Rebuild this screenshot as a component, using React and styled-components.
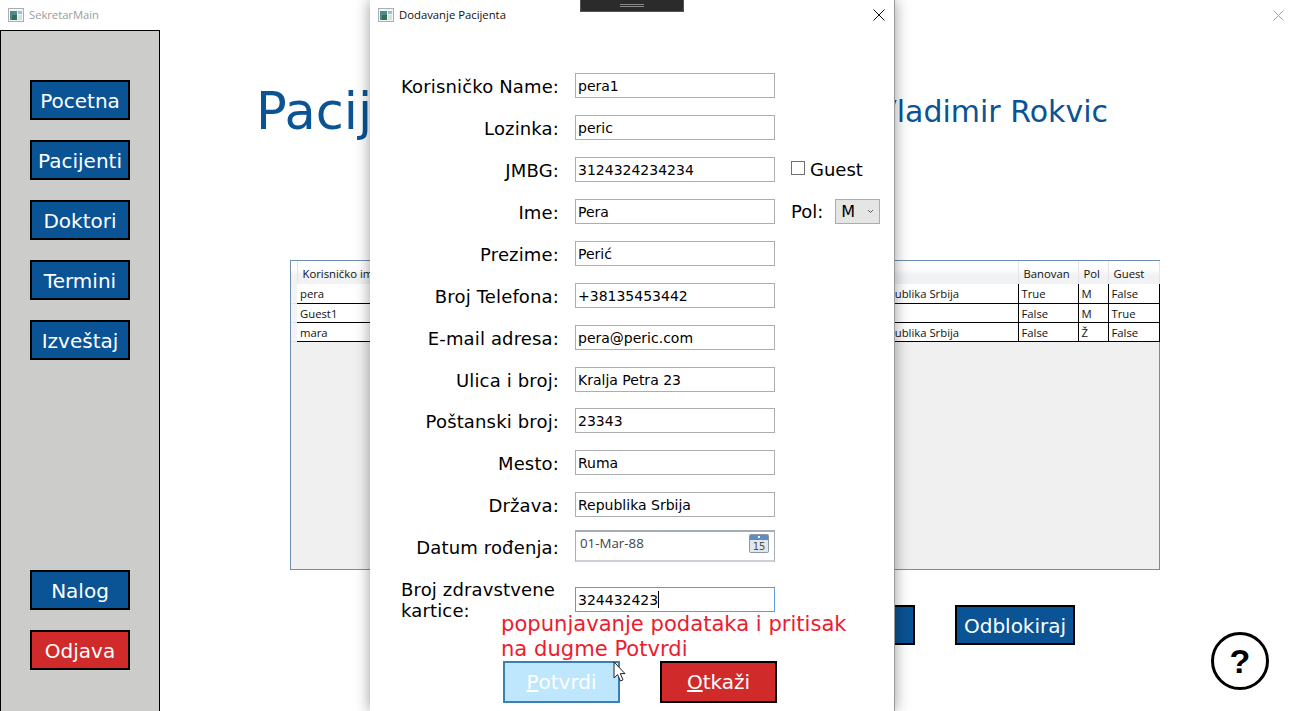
import React from "react";
import styled, {createGlobalStyle} from "styled-components";

const GlobalStyle = createGlobalStyle`
  html, body {
    margin: 0;
    padding: 0;
    background: #fff;
  }
  * {
    box-sizing: border-box;
  }
`

const navItems = ['Pocetna', 'Pacijenti', 'Doktori', 'Termini', 'Izveštaj']

const patients = [
  {name: 'pera', country: 'Republika Srbija', banned: 'True', sex: 'M', guest: 'False'},
  {name: 'Guest1', country: '', banned: 'False', sex: 'M', guest: 'True'},
  {name: 'mara', country: 'Republika Srbija', banned: 'False', sex: 'Ž', guest: 'False'},
]

const WindowIcon = () => (
  <svg width="16" height="14" viewBox="0 0 16 14">
    <rect x="0.5" y="0.5" width="15" height="13" fill="#f4f6f6" stroke="#a9b0b3"/>
    <rect x="2" y="3" width="7" height="9" fill="#4f8a8a"/>
    <rect x="4" y="7" width="5" height="5" fill="#2f6f5c"/>
    <rect x="10" y="3" width="4" height="3" fill="#9fc0c8"/>
    <rect x="10" y="7" width="4" height="5" fill="#d7e0dc"/>
  </svg>
)

const CalendarIcon = () => (
  <svg width="20" height="19" viewBox="0 0 20 19">
    <rect x="0.5" y="0.5" width="19" height="18" rx="1" fill="#e4e7ea" stroke="#8b97a3"/>
    <rect x="1" y="1" width="18" height="5" fill="#5b8fc4"/>
    <rect x="9" y="2" width="2" height="2" fill="#fff"/>
    <text x="10" y="16" textAnchor="middle" fontSize="10" fontFamily="'DejaVu Sans', sans-serif" fill="#47525c">15</text>
  </svg>
)

const App = () => {
  return (
    <Screen>
      <GlobalStyle/>
      <TitleBar>
        <WindowIcon/>
        <TitleText>SekretarMain</TitleText>
        <CloseGlyph $muted>
          <svg width="11" height="11" viewBox="0 0 11 11"><path d="M0.5 0.5 10.5 10.5M10.5 0.5 0.5 10.5" stroke="currentColor" fill="none"/></svg>
        </CloseGlyph>
      </TitleBar>
      <Body>
        <Sidebar>
          <NavGroup>
            {navItems.map(item => <MenuButton key={item}>{item}</MenuButton>)}
          </NavGroup>
          <NavGroup>
            <MenuButton>Nalog</MenuButton>
            <MenuButton $danger>Odjava</MenuButton>
          </NavGroup>
        </Sidebar>
        <Main>
          <Heading>
            <PageTitle>Pacijenti</PageTitle>
            <UserName>Vladimir Rokvic</UserName>
          </Heading>
          <GridPanel>
            <Table>
              <colgroup>
                <col width="6"/>
                <col width="574"/>
                <col width="147"/>
                <col width="60"/>
                <col width="30"/>
                <col width="51"/>
              </colgroup>
              <thead>
                <tr>
                  <HeadCell/>
                  <HeadCell>Korisničko ime</HeadCell>
                  <HeadCell/>
                  <HeadCell>Banovan</HeadCell>
                  <HeadCell>Pol</HeadCell>
                  <HeadCell>Guest</HeadCell>
                </tr>
              </thead>
              <tbody>
                {patients.map(p => (
                  <tr key={p.name}>
                    <RowHeader/>
                    <Cell>{p.name}</Cell>
                    <Cell>{p.country}</Cell>
                    <Cell>{p.banned}</Cell>
                    <Cell>{p.sex}</Cell>
                    <Cell>{p.guest}</Cell>
                  </tr>
                ))}
              </tbody>
            </Table>
          </GridPanel>
          <Actions>
            <MenuButton $wide>Blokiraj</MenuButton>
            <MenuButton $wide>Odblokiraj</MenuButton>
            <HelpButton>?</HelpButton>
          </Actions>
        </Main>
      </Body>

      <Dialog>
        <DialogBar>
          <WindowIcon/>
          <DialogTitle>Dodavanje Pacijenta</DialogTitle>
          <CloseGlyph>
            <svg width="12" height="12" viewBox="0 0 12 12"><path d="M0.5 0.5 11.5 11.5M11.5 0.5 0.5 11.5" stroke="currentColor" fill="none"/></svg>
          </CloseGlyph>
        </DialogBar>
        <Form>
          <FormRow>
            <Label>Korisničko Name:</Label>
            <Field>pera1</Field>
          </FormRow>
          <FormRow>
            <Label>Lozinka:</Label>
            <Field>peric</Field>
          </FormRow>
          <FormRow>
            <Label>JMBG:</Label>
            <Field>3124324234234</Field>
            <Extra>
              <CheckBox/>
              <ExtraLabel>Guest</ExtraLabel>
            </Extra>
          </FormRow>
          <FormRow>
            <Label>Ime:</Label>
            <Field>Pera</Field>
            <Extra>
              <ExtraLabel>Pol:</ExtraLabel>
              <SelectBox>
                M
                <svg width="7" height="5" viewBox="0 0 7 5"><path d="M1 1 3.5 3.5 6 1" stroke="#555" fill="none"/></svg>
              </SelectBox>
            </Extra>
          </FormRow>
          <FormRow>
            <Label>Prezime:</Label>
            <Field>Perić</Field>
          </FormRow>
          <FormRow>
            <Label>Broj Telefona:</Label>
            <Field>+38135453442</Field>
          </FormRow>
          <FormRow>
            <Label>E-mail adresa:</Label>
            <Field>pera@peric.com</Field>
          </FormRow>
          <FormRow>
            <Label>Ulica i broj:</Label>
            <Field>Kralja Petra 23</Field>
          </FormRow>
          <FormRow $space={16}>
            <Label>Poštanski broj:</Label>
            <Field>23343</Field>
          </FormRow>
          <FormRow>
            <Label>Mesto:</Label>
            <Field>Ruma</Field>
          </FormRow>
          <FormRow>
            <Label>Država:</Label>
            <Field>Republika Srbija</Field>
          </FormRow>
          <FormRow $space={13}>
            <Label>Datum rođenja:</Label>
            <DateField>
              <span>01-Mar-88</span>
              <CalendarIcon/>
            </DateField>
          </FormRow>
          <FormRow $space={16}>
            <Label $wrap>Broj zdravstvene kartice:</Label>
            <Field $focused>324432423<Caret/></Field>
          </FormRow>
        </Form>
        <Buttons>
          <DialogButton $primary><u>P</u>otvrdi</DialogButton>
          <DialogButton><u>O</u>tkaži</DialogButton>
        </Buttons>
        <Hint>popunjavanje podataka i pritisak<br/>na dugme Potvrdi</Hint>
        <Pointer width="14" height="22" viewBox="0 0 14 22">
          <path d="M1 1V17L4.6 13.6 7.4 20 10 18.8 7.3 12.6H12Z" fill="#fff" stroke="#222"/>
        </Pointer>
      </Dialog>

      <RemoteTab>
        <TabGrip/>
      </RemoteTab>
    </Screen>
  )
}

export default App;

const Screen = styled.div`
  position: relative;
  width: 1294px;
  height: 711px;
  overflow: hidden;
  display: flex;
  flex-direction: column;
  background: #fff;
  font-family: "DejaVu Sans", Verdana, sans-serif;
`

const TitleBar = styled.div`
  height: 30px;
  flex: none;
  display: flex;
  align-items: center;
  padding: 0 10px 0 8px;
  gap: 5px;
`
const TitleText = styled.span`
  padding-bottom: 2px;
  font: 11.2px "Open Sans", "Noto Sans", sans-serif;
  color: #9b9b9b;
`
const CloseGlyph = styled.span`
  margin-left: auto;
  display: flex;
  color: ${p => p.$muted ? '#a3a3a3' : '#111'};
`

const Body = styled.div`
  flex: 1;
  display: flex;
  min-height: 0;
`
const Sidebar = styled.div`
  width: 160px;
  flex: none;
  display: flex;
  flex-direction: column;
  justify-content: space-between;
  padding: 49px 0 41px 29px;
  background: #cccccb;
  border: 1px solid #000;
  border-bottom: 0;
`
const NavGroup = styled.div`
  display: flex;
  flex-direction: column;
  gap: 20px;
`
const MenuButton = styled.div`
  width: ${p => p.$wide ? '120px' : '100px'};
  height: 40px;
  display: flex;
  align-items: center;
  justify-content: center;
  padding-top: 2px;
  background: ${p => p.$danger ? '#d12a2a' : '#0a5394'};
  border: 2px solid #000;
  color: #fff;
  font-size: 20px;
`

const Main = styled.div`
  flex: 1;
  min-width: 0;
  display: flex;
  flex-direction: column;
`
const Heading = styled.div`
  height: 230px;
  flex: none;
  display: flex;
  align-items: flex-start;
  padding: 49px 0 0 96px;
  color: #0a5394;
  width: 948px;
  justify-content: space-between;
`
const PageTitle = styled.div`
  font-size: 51px;
  line-height: 66px;
`
const UserName = styled.div`
  font-size: 30px;
  line-height: 40px;
  margin-top: 13px;
`

const GridPanel = styled.div`
  margin-left: 130px;
  width: 870px;
  height: 310px;
  flex: none;
  background: #f0f0f0;
  border: 1px solid #6d8fb5;
`
const Table = styled.table`
  width: 868px;
  table-layout: fixed;
  border-collapse: collapse;
  font: 11.3px "Open Sans", "Noto Sans", sans-serif;
  color: #111;
`
const HeadCell = styled.th`
  height: 23px;
  padding: 1px 0 0 5px;
  font-weight: 400;
  text-align: left;
  background: linear-gradient(180deg, #ffffff 0%, #ffffff 35%, #f1f2f3 60%, #f1f2f3 100%);
  border-right: 1px solid #e3e5e8;
`
const RowHeader = styled.td`
  padding: 0;
  background: #f3f3f3;
  border-bottom: 1px solid #e4e4e4;
`
const Cell = styled.td`
  height: 19px;
  padding: 1px 0 0 3px;
  background: #fff;
  border-bottom: 1px solid #000;
  border-right: 1px solid #000;
`

const Actions = styled.div`
  display: flex;
  align-items: flex-start;
  gap: 40px;
  margin: 35px 0 0 635px;
`
const HelpButton = styled.div`
  width: 58px;
  height: 58px;
  margin: 27px 0 0 96px;
  display: flex;
  align-items: center;
  justify-content: center;
  border: 3px solid #000;
  border-radius: 50%;
  font: 700 34px "Liberation Sans", Arial, sans-serif;
  color: #000;
`

const Dialog = styled.div`
  position: absolute;
  left: 370px;
  top: 0;
  width: 525px;
  height: 711px;
  display: flex;
  flex-direction: column;
  background: #fff;
  border-right: 1px solid #9a9a9a;
  box-shadow: 0 0 14px rgba(0, 0, 0, .4);
`
const DialogBar = styled.div`
  height: 30px;
  flex: none;
  display: flex;
  align-items: center;
  gap: 5px;
  padding: 0 9px 0 8px;
`
const DialogTitle = styled.span`
  padding-bottom: 2px;
  font: 11.3px "Open Sans", "Noto Sans", sans-serif;
  color: #111;
`

const Form = styled.div`
  display: flex;
  flex-direction: column;
  padding: 26px 0 0 31px;
`
const FormRow = styled.div`
  display: grid;
  grid-template-columns: 158px 200px auto;
  column-gap: 16px;
  align-items: center;
  margin-top: ${p => p.$space ?? 17}px;
`
const Label = styled.div`
  padding-top: ${p => p.$wrap ? '1px' : '2px'};
  font-size: 18px;
  letter-spacing: .15px;
  line-height: 21px;
  color: #000;
  text-align: ${p => p.$wrap ? 'left' : 'right'};
  white-space: ${p => p.$wrap ? 'normal' : 'nowrap'};
`
const Field = styled.div`
  height: 25px;
  display: flex;
  align-items: center;
  padding-left: 2px;
  border: 1px solid ${p => p.$focused ? '#569de5' : '#abadb3'};
  font-size: 14px;
  color: #000;
`
const Caret = styled.span`
  width: 1px;
  height: 17px;
  background: #000;
`
const DateField = styled.div`
  height: 32px;
  display: flex;
  justify-content: space-between;
  padding: 2px 5px 0 4px;
  line-height: 20px;
  border: 1px solid #a6acb5;
  border-top: 2px solid #a6acb5;
  border-bottom: 2px solid #ccd1d8;
  font: 13.3px "Open Sans", "Noto Sans", sans-serif;
  color: #444;
`
const Extra = styled.div`
  display: flex;
  align-items: center;
  gap: 5px;
`
const ExtraLabel = styled.span`
  font-size: 18px;
  color: #000;
`
const CheckBox = styled.span`
  width: 14px;
  height: 14px;
  margin-bottom: 4px;
  background: #fff;
  border: 1px solid #707070;
`
const SelectBox = styled.div`
  width: 45px;
  height: 25px;
  margin-left: 7px;
  display: flex;
  align-items: center;
  justify-content: space-between;
  padding: 0 5px;
  background: #e5e5e5;
  border: 1px solid #acacac;
  font-size: 16px;
  color: #000;
`

const Buttons = styled.div`
  display: flex;
  gap: 40px;
  margin: 40px 0 0 133px;
`
const DialogButton = styled.div`
  width: 117px;
  height: 42px;
  display: flex;
  align-items: center;
  justify-content: center;
  background: ${p => p.$primary ? '#bee6fd' : '#d12a2a'};
  border: 2px solid ${p => p.$primary ? '#3c7fb1' : '#000'};
  color: #fff;
  font-size: 20px;
`
const Hint = styled.div`
  position: absolute;
  left: 131px;
  top: 611px;
  font-size: 21.1px;
  line-height: 25px;
  color: #ed1c2e;
  white-space: nowrap;
`
const Pointer = styled.svg`
  position: absolute;
  left: 243px;
  top: 661px;
`
const RemoteTab = styled.div`
  position: absolute;
  left: 580px;
  top: 0;
  width: 104px;
  height: 12px;
  display: flex;
  align-items: center;
  justify-content: center;
  background: #2b2b2b;
  border: 1px solid #555;
  border-top: 0;
`
const TabGrip = styled.div`
  width: 24px;
  height: 3px;
  border-top: 1px solid #888;
  border-bottom: 1px solid #888;
`
